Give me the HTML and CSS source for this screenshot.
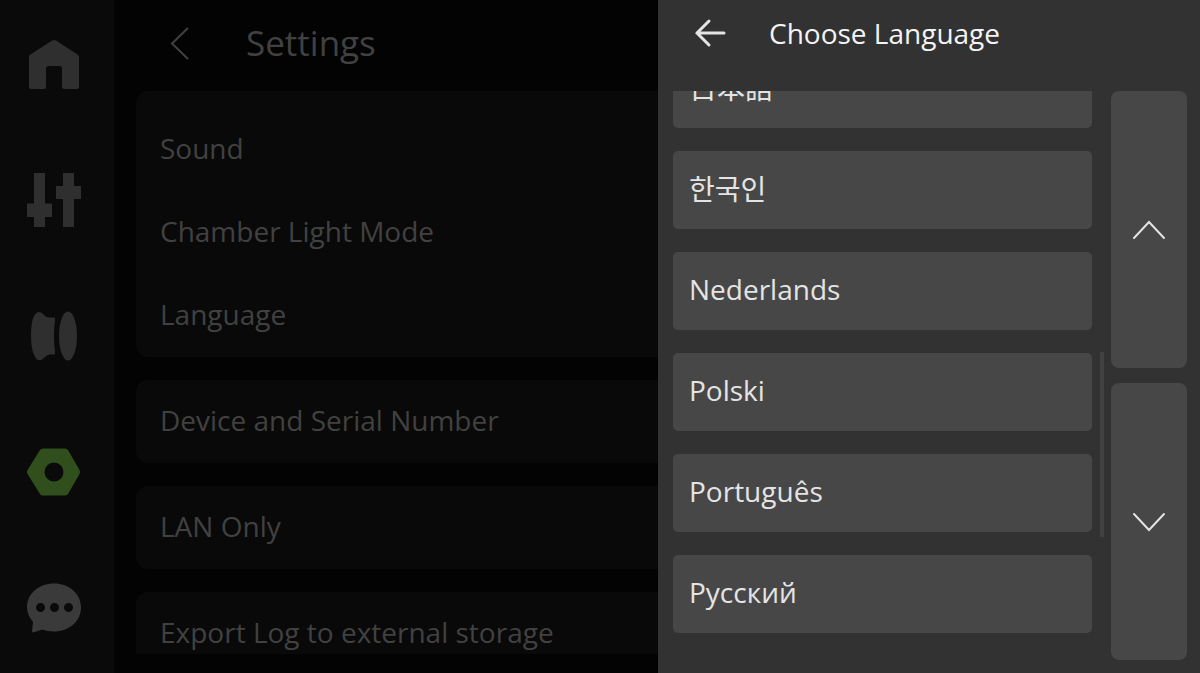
FILE: index.html
```html
<!DOCTYPE html>
<html lang="en">
<head>
<meta charset="utf-8">
<title>Settings</title>
<link rel="stylesheet" href="styles.css">
</head>
<body>
<div class="screen">
  <nav class="sidebar" aria-label="Main">
    <button class="nav-button" type="button" aria-label="Home">
      <svg class="nav-icon" viewBox="0 0 56 56"><path d="M28 4 Q29 4 30 4.600L51.500 18.500Q53 19.500 53 21.500V51Q53 53 51 53H38Q36 53 36 51V32.500Q36 30 33.500 30H22.500Q20 30 20 32.500V51Q20 53 18 53H5Q3 53 3 51V21.500Q3 19.500 4.500 18.500L26 4.600Q27 4 28 4Z"/></svg>
    </button>
    <button class="nav-button" type="button" aria-label="Controls">
      <svg class="nav-icon" viewBox="0 0 56 56"><path d="M8 1H19V31.500H26V45H19V55H8V45H1V31.500H8ZM37 1H48V14H55V27H48V55H37V27H30V14H37Z"/></svg>
    </button>
    <button class="nav-button" type="button" aria-label="Filament">
      <svg class="nav-icon" viewBox="0 0 56 56"><path d="M11 4.500Q15 3 18 7Q20 9.500 24 9.500H28.500Q29.500 9.500 29 12Q27 28 29 44Q29.500 46.500 28.500 46.500H24Q21 46.500 18.500 49.500Q14 54 10.500 51Q5 45 5 28Q5 8 11 4.500Z"/><ellipse cx="42" cy="28" rx="9" ry="24.500"/></svg>
    </button>
    <button class="nav-button nav-button-active" type="button" aria-label="Settings" aria-current="page">
      <svg class="nav-icon" viewBox="0 0 56 56"><path fill-rule="evenodd" d="M17 4.500H39Q41 4.500 42 6L53.500 26Q54.500 28 53.500 30L42 50Q41 51.500 39 51.500H17Q15 51.500 14 50L1.500 30Q.500 28 1.500 26L14 6Q15 4.500 17 4.500ZM28 18.500A9.500 9.500 0 1 0 28 37.500A9.500 9.500 0 1 0 28 18.500Z"/></svg>
    </button>
    <button class="nav-button nav-button-bright" type="button" aria-label="Messages">
      <svg class="nav-icon" viewBox="0 0 56 56"><path fill-rule="evenodd" d="M28 3.500C43 3.500 55 13.500 55 27.500C55 41.500 43 51.500 28 51.500Q21 51.500 16 49.500L7.500 52.500Q6 52.500 6 51L7 42Q1 35 1 27.500C1 13.500 13 3.500 28 3.500ZM14.500 23A4.500 4.500 0 1 0 14.500 32A4.500 4.500 0 1 0 14.500 23ZM28.500 23A4.500 4.500 0 1 0 28.500 32A4.500 4.500 0 1 0 28.500 23ZM42.500 23A4.500 4.500 0 1 0 42.500 32A4.500 4.500 0 1 0 42.500 23Z"/></svg>
    </button>
  </nav>

  <main class="settings">
    <header class="settings-header">
      <button class="back-button" type="button" aria-label="Back">
        <svg class="back-icon" viewBox="0 0 24 36"><path d="M20 3 4 18.500 20 34"/></svg>
      </button>
      <h1 class="settings-title">Settings</h1>
    </header>
    <div class="settings-list">
      <section class="card card-group">
        <button class="row" type="button">Sound</button>
        <button class="row" type="button">Chamber Light Mode</button>
        <button class="row" type="button">Language</button>
      </section>
      <section class="card"><button class="row" type="button">Device and Serial Number</button></section>
      <section class="card"><button class="row" type="button">LAN Only</button></section>
      <section class="card"><button class="row" type="button">Export Log to external storage</button></section>
    </div>
  </main>

  <aside class="drawer" aria-labelledby="drawer-title">
    <header class="drawer-header">
      <button class="back-button" type="button" aria-label="Close">
        <svg class="arrow-icon" viewBox="0 0 32 32"><path d="M15 4 3 16 15 28M3 16H30"/></svg>
      </button>
      <h2 class="drawer-title" id="drawer-title">Choose Language</h2>
    </header>
    <div class="drawer-body">
      <div class="languages">
        <button class="language" type="button" lang="ja">日本語</button>
        <button class="language" type="button" lang="ko">한국인</button>
        <button class="language" type="button" lang="nl">Nederlands</button>
        <button class="language" type="button" lang="pl">Polski</button>
        <button class="language" type="button" lang="pt">Português</button>
        <button class="language" type="button" lang="ru">Русский</button>
      </div>
      <div class="scroll-track"><div class="scroll-thumb"></div></div>
      <div class="pager">
        <button class="pager-button" type="button" aria-label="Scroll up">
          <svg class="chevron" viewBox="0 0 36 24"><path d="M3 20 18 4 33 20"/></svg>
        </button>
        <button class="pager-button" type="button" aria-label="Scroll down">
          <svg class="chevron" viewBox="0 0 36 24"><path d="M3 4 18 20 33 4"/></svg>
        </button>
      </div>
    </div>
  </aside>
</div>
</body>
</html>
```
FILE: styles.css
```css
* {
  box-sizing: border-box;
}

body {
  margin: 0;
  background: #030303;
  font-family: "Open Sans", "Noto Sans CJK JP", "Noto Sans CJK KR", sans-serif;
}

button {
  padding: 0;
  border: 0;
  background: none;
  color: inherit;
  font: inherit;
  text-align: left;
  cursor: pointer;
}

svg {
  display: block;
}

.screen {
  display: grid;
  grid-template-columns: 114px minmax(0, 1fr) 542px;
  height: 100vh;
  overflow: hidden;
}

.sidebar {
  display: flex;
  flex-direction: column;
  align-items: center;
  justify-content: space-between;
  padding: 36px 6px 37px 0;
  background: #0a0a0a;
}

.nav-button {
  color: #2f2f2f;
}

.nav-button-active {
  color: #304f1c;
}

.nav-button-bright {
  color: #3a3a3a;
}

.nav-icon {
  width: 56px;
  height: 56px;
  fill: currentColor;
}

.settings {
  display: flex;
  flex-direction: column;
  min-height: 0;
  padding: 0 0 19px 22px;
  color: #414141;
}

.settings-header {
  display: flex;
  flex: none;
  align-items: center;
  gap: 54px;
  height: 91px;
  padding: 0 0 5px 32px;
}

.back-icon {
  width: 24px;
  height: 36px;
  fill: none;
  stroke: currentColor;
  stroke-width: 2;
}

.settings-title {
  margin: 0;
  font-size: 35px;
  font-weight: 400;
  line-height: 40px;
}

.settings-list {
  display: flex;
  flex: 1;
  flex-direction: column;
  gap: 23px;
  min-height: 0;
  overflow: hidden;
}

.card {
  flex: none;
  border-radius: 12px 0 0 12px;
  background: #090909;
}

.card-group {
  padding-top: 17px;
}

.row {
  display: block;
  width: 100%;
  height: 83px;
  padding: 0 0 4px 24px;
  font-size: 28px;
}

.drawer {
  display: flex;
  flex-direction: column;
  min-height: 0;
  padding: 0 13px 13px 15px;
  background: #323232;
  color: #e4e4e4;
}

.drawer-header {
  display: flex;
  flex: none;
  align-items: center;
  gap: 43px;
  height: 91px;
  padding: 0 0 25px 21px;
}

.arrow-icon {
  width: 32px;
  height: 32px;
  fill: none;
  stroke: currentColor;
  stroke-width: 3;
  stroke-linecap: round;
}

.drawer-title {
  margin: 0;
  color: #f4f4f4;
  font-size: 28px;
  font-weight: 400;
  line-height: 38px;
}

.drawer-body {
  display: flex;
  flex: 1;
  min-height: 0;
}

.languages {
  display: flex;
  flex: 1;
  flex-direction: column;
  justify-content: flex-end;
  gap: 23px;
  padding-bottom: 27px;
  overflow: hidden;
}

.language {
  flex: none;
  height: 78px;
  padding: 0 16px 4px;
  border-radius: 5px;
  background: #474747;
  font-size: 28px;
}

.scroll-track {
  display: grid;
  grid-template-rows: 261fr 185fr 123fr;
  width: 4px;
  margin: 0 7px 0 8px;
}

.scroll-thumb {
  grid-row: 2;
  background: #414141;
}

.pager {
  display: grid;
  grid-template-rows: 1fr 1fr;
  gap: 15px;
  width: 76px;
}

.pager-button {
  display: flex;
  align-items: center;
  justify-content: center;
  border-radius: 8px;
  background: #474747;
}

.chevron {
  width: 36px;
  height: 24px;
  fill: none;
  stroke: currentColor;
  stroke-width: 2;
  stroke-linecap: round;
}
```
